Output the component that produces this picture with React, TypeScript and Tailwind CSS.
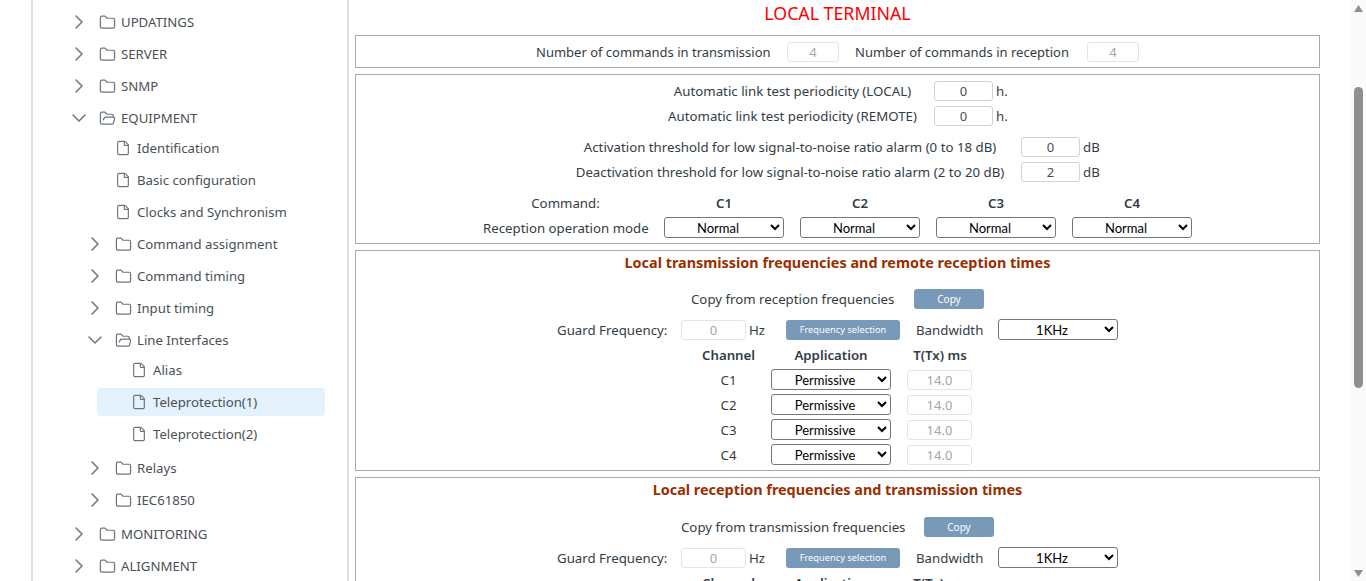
import { ChevronDown, ChevronRight, File, Folder, FolderOpen } from 'lucide-react'

type Node = { label: string; kids?: Node[]; open?: boolean; selected?: boolean }

const tree: Node[] = [
  { label: 'UPDATINGS', kids: [] },
  { label: 'SERVER', kids: [] },
  { label: 'SNMP', kids: [] },
  {
    label: 'EQUIPMENT',
    open: true,
    kids: [
      { label: 'Identification' },
      { label: 'Basic configuration' },
      { label: 'Clocks and Synchronism' },
      { label: 'Command assignment', kids: [] },
      { label: 'Command timing', kids: [] },
      { label: 'Input timing', kids: [] },
      {
        label: 'Line Interfaces',
        open: true,
        kids: [
          { label: 'Alias' },
          { label: 'Teleprotection(1)', selected: true },
          { label: 'Teleprotection(2)' },
        ],
      },
      { label: 'Relays', kids: [] },
      { label: 'IEC61850', kids: [] },
    ],
  },
  { label: 'MONITORING', kids: [] },
  { label: 'ALIGNMENT', kids: [] },
]

const TreeRow = ({ node, depth }: { node: Node; depth: number }) => {
  const isFolder = node.kids !== undefined

  return (
    <div>
      <div className="flex h-8 items-center" style={{ paddingLeft: depth * 16 }}>
        <div className={`flex h-7 flex-1 items-center rounded ${node.selected ? 'bg-[#e3f2fd]' : ''}`}>
          <span className="flex w-7 shrink-0 justify-center text-[#6c757d]">
            {isFolder &&
              (node.open ? (
                <ChevronDown size={24} strokeWidth={1.5} />
              ) : (
                <ChevronRight size={24} strokeWidth={1.5} />
              ))}
          </span>
          <span className="flex w-7 shrink-0 justify-center text-[#6c757d]">
            {isFolder ? (
              node.open ? (
                <FolderOpen size={17} strokeWidth={1.75} />
              ) : (
                <Folder size={17} strokeWidth={1.75} />
              )
            ) : (
              <File size={16} strokeWidth={1.75} />
            )}
          </span>
          <span className="whitespace-nowrap pt-[2px]">{node.label}</span>
        </div>
      </div>
      {node.open && node.kids && (
        <div className="mb-[2px] mt-[-2px]">
          {node.kids.map((kid) => (
            <TreeRow key={kid.label} node={kid} depth={depth + 1} />
          ))}
        </div>
      )}
    </div>
  )
}

const Field = ({ value, width = 'w-[59px]', dim }: { value: string; width?: string; dim?: boolean }) => (
  <input
    readOnly
    disabled={dim}
    value={value}
    className={`h-[20px] ${width} rounded-[3px] border border-[#ced4da] bg-white text-center text-[13px] ${dim ? 'border-[#e3e6e9] text-[#a3a6a9]' : 'text-[#495057]'}`}
  />
)

const Pick = ({ value }: { value: string }) => (
  <select
    defaultValue={value}
    className="h-[21px] w-[120px] rounded-[3px] border border-[#767676] bg-white text-center font-['Lato',sans-serif] text-[13px] text-black"
  >
    <option>{value}</option>
  </select>
)

const Blue = ({ label, className }: { label: string; className: string }) => (
  <button className={`h-[20px] rounded-[3px] bg-[#7899b8] pt-[1px] text-center text-white ${className}`}>{label}</button>
)

const Box = ({ children, className = '' }: { children: React.ReactNode; className?: string }) => (
  <div className={`mb-[6px] border border-[#aaaaaa] ${className}`}>{children}</div>
)

// plain text spans sit 1px low next to the inputs, the wrapped controls don't
const Row = ({ children, className = '' }: { children: React.ReactNode; className?: string }) => (
  <div className={`flex h-[25px] items-center justify-center [&>span:not(.flex)]:pt-[2px] ${className}`}>{children}</div>
)

const FreqBox = ({
  title,
  copyLabel,
  copyWidth,
  copyGap,
  className = '',
}: {
  title: string
  copyLabel: string
  copyWidth: string
  copyGap: string
  className?: string
}) => (
  <Box>
    <div className="flex h-[24px] items-center justify-center text-[14.4px] font-bold text-[#992e00]">{title}</div>
    <Row className={className}>
      <span className={`${copyWidth} whitespace-nowrap text-center`}>{copyLabel}</span>
      <span className={copyGap}>
        <Blue label="Copy" className="w-[70px] text-[10px]" />
      </span>
    </Row>
    <Row className="mt-[6px]">
      <span className="w-[109px] whitespace-nowrap">Guard Frequency:</span>
      <span className="ml-[15px] flex">
        <Field value="0" width="w-[65px]" dim />
      </span>
      <span className="ml-[3px] w-[16px]">Hz</span>
      <span className="ml-[21px] flex">
        <Blue label="Frequency selection" className="w-[114px] text-[9.3px]" />
      </span>
      <span className="ml-[16px] w-[66px] whitespace-nowrap">Bandwidth</span>
      <span className="ml-[16px] flex">
        <Pick value="1KHz" />
      </span>
    </Row>
    <Row>
      <span className="w-[53px] whitespace-nowrap text-center font-semibold">Channel</span>
      <span className="ml-[16px] w-[120px] text-center font-semibold">Application</span>
      <span className="ml-[16px] w-[66px] whitespace-nowrap text-center font-semibold">T(Tx) ms</span>
    </Row>
    {['C1', 'C2', 'C3', 'C4'].map((c) => (
      <Row key={c}>
        <span className="w-[53px] text-center">{c}</span>
        <span className="ml-[16px] flex">
          <Pick value="Permissive" />
        </span>
        <span className="ml-[16px] flex w-[66px]">
          <Field value="14.0" width="w-[65px]" dim />
        </span>
      </Row>
    ))}
    <div className="h-[3px]" />
  </Box>
)

const Arrow = ({ d, className = '' }: { d: string; className?: string }) => (
  <svg className={className} width="9" height="7" viewBox="0 0 9 7">
    <path d={d} fill="#8f8f8f" />
  </svg>
)

export default function App() {
  return (
    <div className="flex h-[581px] overflow-hidden bg-white font-['Noto_Sans','Open_Sans',sans-serif] text-[13.25px] text-[#333c45]">
      <aside className="ml-[31px] h-full w-[318px] shrink-0 border-x-2 border-[#dee0e2] pl-[32px] pr-[22px] pt-[6px] text-[13.2px] text-[#495057]">
        {tree.map((node) => (
          <TreeRow key={node.label} node={node} depth={0} />
        ))}
      </aside>

      <main className="flex-1 pl-[6px] pr-[31px]">
        <h1 className="flex h-[35px] items-start justify-center pt-[2px] text-[17.75px] leading-[22px] text-[#ff0000]">
          LOCAL TERMINAL
        </h1>
        <Box>
          <Row className="h-[31px] text-[13px]">
            <span className="w-[235px] whitespace-nowrap">Number of commands in transmission</span>
            <span className="ml-[16px] flex">
              <Field value="4" width="w-[52px]" dim />
            </span>
            <span className="ml-[16px] w-[216px] whitespace-nowrap">Number of commands in reception</span>
            <span className="ml-[16px] flex">
              <Field value="4" width="w-[52px]" dim />
            </span>
          </Row>
        </Box>
        <Box className="pb-[3px] pt-[3px]">
          <Row>
            <span className="w-[251px] whitespace-nowrap text-center">Automatic link test periodicity (LOCAL)</span>
            <span className="ml-[16px] flex">
              <Field value="0" />
            </span>
            <span className="ml-[3px] w-[12px]">h.</span>
          </Row>
          <Row>
            <span className="w-[251px] whitespace-nowrap text-center">Automatic link test periodicity (REMOTE)</span>
            <span className="ml-[16px] flex">
              <Field value="0" />
            </span>
            <span className="ml-[3px] w-[12px]">h.</span>
          </Row>
          <Row className="mt-[6px]">
            <span className="w-[430px] whitespace-nowrap text-center">
              Activation threshold for low signal-to-noise ratio alarm (0 to 18 dB)
            </span>
            <span className="ml-[16px] flex">
              <Field value="0" />
            </span>
            <span className="ml-[3px] w-[17px]">dB</span>
          </Row>
          <Row>
            <span className="w-[430px] whitespace-nowrap text-center">
              Deactivation threshold for low signal-to-noise ratio alarm (2 to 20 dB)
            </span>
            <span className="ml-[16px] flex">
              <Field value="2" />
            </span>
            <span className="ml-[3px] w-[17px]">dB</span>
          </Row>
          <Row className="mt-[6px]">
            <span className="w-[165px] text-center">Command:</span>
            {['C1', 'C2', 'C3', 'C4'].map((c) => (
              <span key={c} className="ml-[16px] w-[120px] text-center font-semibold">
                {c}
              </span>
            ))}
          </Row>
          <Row>
            <span className="w-[165px] whitespace-nowrap text-center">Reception operation mode</span>
            {['C1', 'C2', 'C3', 'C4'].map((c) => (
              <span key={c} className="ml-[16px] flex">
                <Pick value="Normal" />
              </span>
            ))}
          </Row>
        </Box>
        <FreqBox
          title="Local transmission frequencies and remote reception times"
          copyLabel="Copy from reception frequencies"
          copyWidth="w-[203px]"
          copyGap="ml-[20px] flex"
          className="mt-[11px]"
        />
        <FreqBox
          title="Local reception frequencies and transmission times"
          copyLabel="Copy from transmission frequencies"
          copyWidth="w-[222px]"
          copyGap="ml-[21px] flex"
          className="mt-[12px]"
        />
      </main>

      <div className="flex w-[15px] shrink-0 flex-col items-center bg-[#fafafa]">
        <Arrow className="mt-[5px]" d="M4.5 0 L9 7 L0 7 Z" />
        <div className="mt-[75px] h-[301px] w-[9px] shrink-0 rounded-full bg-[#8f8f8f]" />
        <Arrow className="mb-[4px] mt-auto" d="M0 0 L9 0 L4.5 7 Z" />
      </div>
    </div>
  )
}
